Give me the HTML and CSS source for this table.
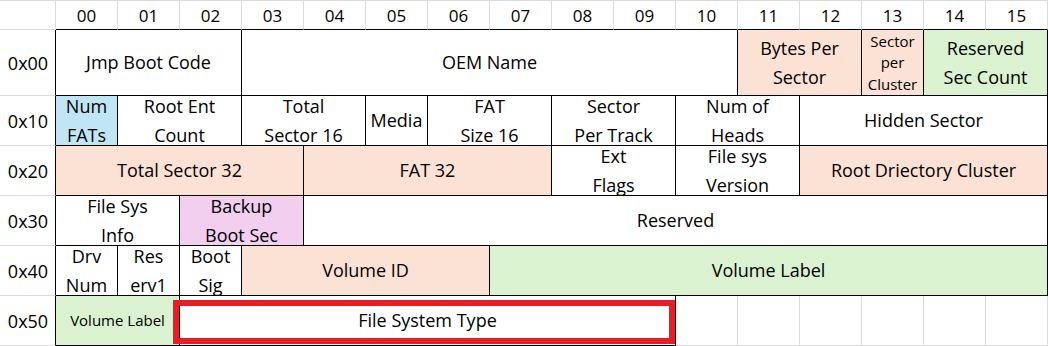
FILE: index.html
```html
<!DOCTYPE html>
<html>
<head>
<meta charset="utf-8">
<link rel="stylesheet" href="styles.css">
</head>
<body>
<div class="sheet">
  <div class="h first"></div>
  <div class="h">00</div><div class="h">01</div><div class="h">02</div><div class="h">03</div>
  <div class="h">04</div><div class="h">05</div><div class="h">06</div><div class="h">07</div>
  <div class="h">08</div><div class="h">09</div><div class="h">10</div><div class="h">11</div>
  <div class="h">12</div><div class="h">13</div><div class="h">14</div><div class="h">15</div>

  <div class="lbl">0x00</div>
  <div class="c s3">Jmp Boot Code</div>
  <div class="c s8">OEM Name</div>
  <div class="c s2 peach">Bytes Per<br>Sector</div>
  <div class="c peach tiny">Sector<br>per<br>Cluster</div>
  <div class="c s2 green">Reserved<br>Sec Count</div>

  <div class="lbl">0x10</div>
  <div class="c blue">Num<br>FATs</div>
  <div class="c s2">Root Ent<br>Count</div>
  <div class="c s2">Total<br>Sector 16</div>
  <div class="c">Media</div>
  <div class="c s2">FAT<br>Size 16</div>
  <div class="c s2">Sector<br>Per Track</div>
  <div class="c s2">Num of<br>Heads</div>
  <div class="c s4">Hidden Sector</div>

  <div class="lbl">0x20</div>
  <div class="c s4 peach">Total Sector 32</div>
  <div class="c s4 peach">FAT 32</div>
  <div class="c s2">Ext<br>Flags</div>
  <div class="c s2">File sys<br>Version</div>
  <div class="c s4 peach">Root Driectory Cluster</div>

  <div class="lbl">0x30</div>
  <div class="c s2">File Sys<br>Info</div>
  <div class="c s2 purple">Backup<br>Boot Sec</div>
  <div class="c s12">Reserved</div>

  <div class="lbl">0x40</div>
  <div class="c">Drv<br>Num</div>
  <div class="c">Res<br>erv1</div>
  <div class="c">Boot<br>Sig</div>
  <div class="c s4 peach">Volume ID</div>
  <div class="c s9 green">Volume Label</div>

  <div class="lbl">0x50</div>
  <div class="c s2 green small">Volume Label</div>
  <div class="c s8">File System Type</div>
  <div class="e"></div><div class="e"></div><div class="e"></div>
  <div class="e"></div><div class="e"></div><div class="e"></div>

  <div class="mark"></div>
</div>
</body>
</html>
```

FILE: styles.css
```css
* { box-sizing: border-box; }
html, body { margin: 0; padding: 0; background: #fff; }
body { font-family: "Open Sans", "Noto Sans CJK KR", sans-serif; color: #000; }

.sheet {
  position: relative;
  display: grid;
  grid-template-columns: 56px repeat(16, 62px);
  grid-template-rows: 30px 66px repeat(5, 50px);
  width: 1048px;
  height: 346px;
  overflow: hidden;
}

.sheet > div {
  display: flex;
  align-items: center;
  justify-content: center;
  text-align: center;
  overflow: hidden;
  white-space: nowrap;
}

.h {
  border-top: 1px solid #dcdcdc;
  border-right: 1px solid #dcdcdc;
  border-bottom: 1px solid #000;
  font-size: 17px;
  padding-top: 1px;
}
.h.first { border-bottom-color: #dcdcdc; }

.lbl {
  border-right: 1px solid #000;
  border-bottom: 1px solid #dcdcdc;
  font-size: 18px;
  padding-left: 1px;
}

.c {
  border-right: 1px solid #000;
  border-bottom: 1px solid #000;
  font-size: 18px;
  line-height: 29px;
}

.e {
  border-right: 1px solid #dcdcdc;
  border-bottom: 1px solid #dcdcdc;
}

.small { font-size: 15px; line-height: 21.5px; }
.tiny { font-size: 15px; line-height: 21.5px; padding-top: 1px; }

.s2 { grid-column: span 2; }
.s3 { grid-column: span 3; }
.s4 { grid-column: span 4; }
.s8 { grid-column: span 8; }
.s9 { grid-column: span 9; }
.s12 { grid-column: span 12; }

.peach { background: #fbe2d5; }
.green { background: #daf2d0; }
.blue { background: #c0e6f5; }
.purple { background: #f2ceef; }

.mark {
  position: absolute;
  left: 173px;
  top: 300px;
  width: 502px;
  height: 44px;
  border: 6px solid #ec1c24;
  pointer-events: none;
}
```
